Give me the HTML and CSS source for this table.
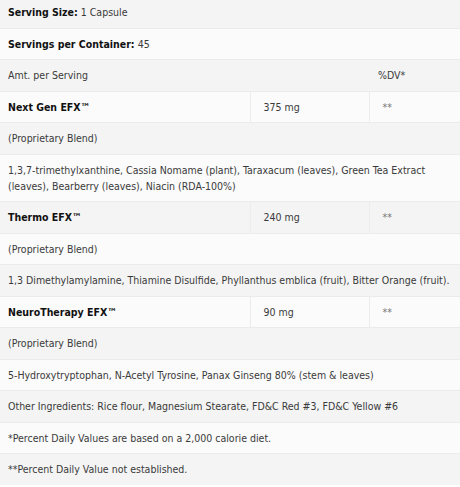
FILE: index.html
```html
<!DOCTYPE html>
<html lang="en">
<head>
<meta charset="utf-8">
<title>Supplement Facts</title>
<link rel="stylesheet" href="styles.css">
</head>
<body>
<table class="facts">
  <colgroup>
    <col class="c-name">
    <col class="c-amt">
    <col class="c-dv">
  </colgroup>
  <tbody>
    <tr class="odd"><td colspan="3"><b>Serving Size:</b> 1 Capsule</td></tr>
    <tr class="even"><td colspan="3"><b>Servings per Container:</b> 45</td></tr>
    <tr class="odd"><td colspan="2">Amt. per Serving</td><td class="dv-head">%DV*</td></tr>
    <tr class="even split"><td><b>Next Gen EFX™</b></td><td class="amt">375 mg</td><td class="dv">**</td></tr>
    <tr class="odd"><td colspan="3">(Proprietary Blend)</td></tr>
    <tr class="even"><td colspan="3">1,3,7-trimethylxanthine, Cassia Nomame (plant), Taraxacum (leaves), Green Tea Extract (leaves), Bearberry (leaves), Niacin (RDA-100%)</td></tr>
    <tr class="odd split"><td><b>Thermo EFX™</b></td><td class="amt">240 mg</td><td class="dv">**</td></tr>
    <tr class="even"><td colspan="3">(Proprietary Blend)</td></tr>
    <tr class="odd"><td colspan="3">1,3 Dimethylamylamine, Thiamine Disulfide, Phyllanthus emblica (fruit), Bitter Orange (fruit).</td></tr>
    <tr class="even split"><td><b>NeuroTherapy EFX™</b></td><td class="amt">90 mg</td><td class="dv">**</td></tr>
    <tr class="odd"><td colspan="3">(Proprietary Blend)</td></tr>
    <tr class="even"><td colspan="3">5-Hydroxytryptophan, N-Acetyl Tyrosine, Panax Ginseng 80% (stem &amp; leaves)</td></tr>
    <tr class="odd"><td colspan="3">Other Ingredients: Rice flour, Magnesium Stearate, FD&amp;C Red #3, FD&amp;C Yellow #6</td></tr>
    <tr class="even"><td colspan="3">*Percent Daily Values are based on a 2,000 calorie diet.</td></tr>
    <tr class="odd"><td colspan="3">**Percent Daily Value not established.</td></tr>
  </tbody>
</table>
</body>
</html>
```
FILE: styles.css
```css
html, body {
  margin: 0;
  padding: 0;
  background: #ffffff;
}

body {
  font-family: "DejaVu Sans Condensed", "DejaVu Sans", sans-serif;
  font-size: 10.5px;
  line-height: 16px;
  color: #3a3a3a;
}

.facts {
  width: 460px;
  margin-top: -4px;
  border-collapse: collapse;
  table-layout: fixed;
}

.c-name { width: 250px; }
.c-amt { width: 119px; }
.c-dv { width: 91px; }

.facts td {
  padding: 7.25px 6px 7.25px 8px;
  border-top: 1px solid #ebebeb;
  vertical-align: middle;
  text-align: left;
}

.facts b {
  color: #111111;
  font-weight: bold;
}

.odd { background: #f4f4f4; }
.even { background: #fbfbfb; }

.split td + td {
  border-left: 1px solid #ececec;
}

.facts td.amt { padding-left: 13px; }
.facts td.dv-head { padding-left: 9px; }
.facts td.dv { padding-left: 13px; color: #777777; }
```
